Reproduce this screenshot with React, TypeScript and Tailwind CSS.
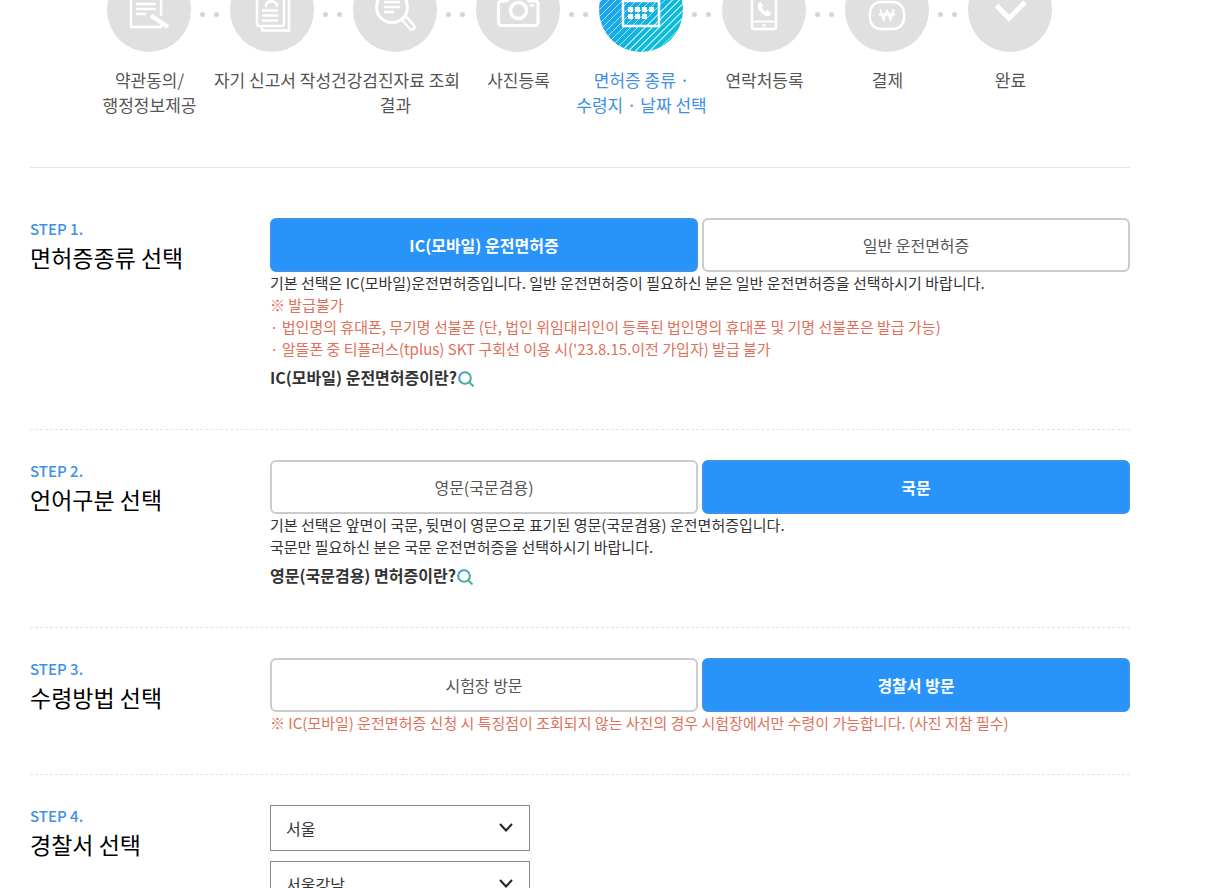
import { useState } from "react";
import type { ReactNode } from "react";

const Line = ({ children }: { children: ReactNode }) => (
  <svg
    viewBox="0 0 84 84"
    className="size-[84px] shrink-0"
    fill="none"
    stroke="#fff"
    strokeWidth="2.5"
    strokeLinecap="round"
    strokeLinejoin="round"
    aria-hidden="true"
  >
    {children}
  </svg>
);

const steps: { label: string[]; active?: boolean; icon: ReactNode }[] = [
  {
    label: ["약관동의/", "행정정보제공"],
    icon: (
      <>
        <path d="M54 47V24H24V59H54V57" />
        <path d="M30 30H48M30 36H48M30 41H48M30 46H38" />
        <path d="M44 47.500L61 59" strokeWidth="4.5" strokeLinecap="butt" />
      </>
    ),
  },
  {
    label: ["자기 신고서 작성"],
    icon: (
      <>
        <rect x="27" y="22" width="27" height="36" rx="2" />
        <path d="M32 59V62.500H59V28H54" />
        <path d="M33 42.500H47M33 47.500H47M33 52.500H47" />
        <path d="M36 38C36 32 47 32 47 38" />
        <circle cx="41" cy="29" r="3" />
      </>
    ),
  },
  {
    label: ["건강검진자료 조회", "결과"],
    icon: (
      <>
        <circle cx="39" cy="39" r="15.500" strokeWidth="3" />
        <path d="M32 34H46M32 39H46M32 44H40" />
        <path d="M52 51L59 59" strokeWidth="7.5" />
        <path d="M52.500 52L58.500 59" stroke="#e0e0e0" strokeWidth="3" />
      </>
    ),
  },
  {
    label: ["사진등록"],
    icon: (
      <>
        <path
          d="M26 33H31L34 28H50L53 33H59Q62 33 62 36V54Q62 57.500 59 57.500H26Q22.500 57.500 22.500 54V36Q22.500 33 26 33Z"
          strokeWidth="3"
        />
        <circle cx="42.500" cy="42.500" r="8" strokeWidth="3.5" />
        <path d="M55 37.500H57" strokeWidth="3" />
      </>
    ),
  },
  {
    label: ["면허증 종류 ·", "수령지 · 날짜 선택"],
    active: true,
    icon: (
      <>
        <path d="M24 27H60V58H24Z" />
        <path d="M24 33H60M32 23V29M52 23V29" />
        <path
          d="M29 41.500H34M36 41.500H41M43 41.500H48M50 41.500H55M29 48.500H34M36 48.500H41M43 48.500H48"
          strokeWidth="5"
          strokeLinecap="butt"
        />
      </>
    ),
  },
  {
    label: ["연락처등록"],
    icon: (
      <>
        <rect x="30" y="22" width="24" height="39" rx="2" />
        <path d="M30 53.500H54" strokeWidth="2" />
        <circle cx="42" cy="57.500" r="0.500" />
        <path
          d="M37 35.500C33 40 42 49 47 47.500L49 45.500L45 42.500L43.500 44C41.500 43 40.500 41.500 39.500 39.500L41 38L38.500 34.500Z"
          fill="#fff"
          strokeWidth="1"
        />
      </>
    ),
  },
  {
    label: ["결제"],
    icon: (
      <>
        <rect x="25" y="34" width="34" height="27" rx="11" />
        <path d="M35.500 42L38.500 52L42 42L45.500 52L48.500 42M34.500 46.500H49.500" strokeWidth="2" />
      </>
    ),
  },
  {
    label: ["완료"],
    icon: <path d="M28.500 37.500L41 50.500L57 34" strokeWidth="5" strokeLinecap="butt" strokeLinejoin="miter" />,
  },
];

function StepNav() {
  return (
    <ol className="-mt-8 flex justify-center">
      {steps.map((step, i) => (
        <li key={step.label[0]} className="relative flex w-[123px] flex-col items-center">
          <div className="ml-[19px] size-[84px] self-start overflow-hidden rounded-full bg-[#e0e0e0]">
            {step.active ? (
              <div className="bg-linear-to-br from-[#2893f8] to-[#08c8cc]">
                <div className="bg-[repeating-linear-gradient(135deg,transparent_0_4px,#ffffffa0_4px_5px)]">
                  <Line>{step.icon}</Line>
                </div>
              </div>
            ) : (
              <Line>{step.icon}</Line>
            )}
          </div>
          {i < steps.length - 1 && (
            <div className="absolute top-11 -right-2 flex gap-[9px]">
              <i className="size-[5px] rounded-full bg-[#d5d5d5]" />
              <i className="size-[5px] rounded-full bg-[#d5d5d5]" />
            </div>
          )}
          <p
            className={`mt-[15px] text-center text-[17px] leading-[25px] whitespace-nowrap ${
              step.active ? "text-[#3e90e5]" : "text-[#555]"
            }`}
          >
            {step.label.map((line) => (
              <span key={line} className="block">
                {line}
              </span>
            ))}
          </p>
        </li>
      ))}
    </ol>
  );
}

function Section({ no, title, last, children }: { no: number; title: string; last?: boolean; children: ReactNode }) {
  return (
    <section className={`flex pb-10 ${last ? "" : "mb-[30px] border-b border-dashed border-[#e3e3e3]"}`}>
      <div className="w-60 shrink-0">
        <p className="text-[15px] leading-[22px] font-medium text-[#3e90e5]">STEP {no}.</p>
        <h2 className="text-[23px] leading-[34px] text-black">{title}</h2>
      </div>
      <div className="min-w-0 flex-1">{children}</div>
    </section>
  );
}

function Choice({ options, initial }: { options: string[]; initial: number }) {
  const [selected, setSelected] = useState(initial);

  return (
    <div className="grid grid-cols-2 gap-1">
      {options.map((option, i) => (
        <button
          key={option}
          type="button"
          aria-pressed={selected === i}
          onClick={() => setSelected(i)}
          className={`h-[54px] rounded-md border-2 text-[16px] ${
            selected === i
              ? "border-[#3b93ea] bg-[#2893f8] font-bold text-white"
              : "border-[#ccc] bg-white text-[#555]"
          }`}
        >
          {option}
        </button>
      ))}
    </div>
  );
}

function HelpLink({ children }: { children: ReactNode }) {
  return (
    <a href="#help" className="mt-[5px] flex h-6 items-center gap-px text-[16px] font-bold text-[#333]">
      {children}
      <svg viewBox="0 0 16 16" className="mt-1 size-4" fill="none" strokeWidth="2" aria-hidden="true">
        <defs>
          <linearGradient id="lens" gradientUnits="userSpaceOnUse" x1="1" y1="1" x2="15" y2="15">
            <stop stopColor="#3e90e5" />
            <stop offset="1" stopColor="#4cba7c" />
          </linearGradient>
        </defs>
        <circle cx="7" cy="7" r="5.800" stroke="url(#lens)" />
        <path d="M11 11L15.500 15.500" stroke="url(#lens)" />
      </svg>
    </a>
  );
}

function Select({ label, options }: { label: string; options: string[] }) {
  return (
    <div className="relative w-[260px]">
      <select
        aria-label={label}
        className="h-[46px] w-full appearance-none border border-[#888] bg-white px-[15px] text-[16px] text-[#333]"
      >
        {options.map((o) => (
          <option key={o}>{o}</option>
        ))}
      </select>
      <svg
        viewBox="0 0 14 9"
        className="pointer-events-none absolute top-[18px] right-[17px] h-[9px] w-[14px]"
        fill="none"
        stroke="#222"
        strokeWidth="2"
        aria-hidden="true"
      >
        <path d="M1 1L7 7.500L13 1" />
      </svg>
    </div>
  );
}

export default function App() {
  return (
    <div className="h-screen overflow-hidden bg-white px-[30px] font-['Noto_Sans_CJK_KR',sans-serif] text-[#333]">
      <main className="flow-root max-w-[1100px]">
        <StepNav />
        <div className="mt-[50px] mb-[50px] border-t border-[#e5e5e5]" />

        <Section no={1} title="면허증종류 선택">
          <Choice options={["IC(모바일) 운전면허증", "일반 운전면허증"]} initial={0} />
          <div className="text-[15px] leading-[22px]">
            <p>기본 선택은 IC(모바일)운전면허증입니다. 일반 운전면허증이 필요하신 분은 일반 운전면허증을 선택하시기 바랍니다.</p>
            <div className="text-[#e0705a]">
              <p>※ 발급불가</p>
              <p>· 법인명의 휴대폰, 무기명 선불폰 (단, 법인 위임대리인이 등록된 법인명의 휴대폰 및 기명 선불폰은 발급 가능)</p>
              <p>· 알뜰폰 중 티플러스(tplus) SKT 구회선 이용 시('23.8.15.이전 가입자) 발급 불가</p>
            </div>
          </div>
          <HelpLink>IC(모바일) 운전면허증이란?</HelpLink>
        </Section>

        <Section no={2} title="언어구분 선택">
          <Choice options={["영문(국문겸용)", "국문"]} initial={1} />
          <div className="text-[15px] leading-[22px]">
            <p>기본 선택은 앞면이 국문, 뒷면이 영문으로 표기된 영문(국문겸용) 운전면허증입니다.</p>
            <p>국문만 필요하신 분은 국문 운전면허증을 선택하시기 바랍니다.</p>
          </div>
          <HelpLink>영문(국문겸용) 면허증이란?</HelpLink>
        </Section>

        <Section no={3} title="수령방법 선택">
          <Choice options={["시험장 방문", "경찰서 방문"]} initial={1} />
          <p className="text-[15px] leading-[22px] text-[#e0705a]">
            ※ IC(모바일) 운전면허증 신청 시 특징점이 조회되지 않는 사진의 경우 시험장에서만 수령이 가능합니다. (사진 지참 필수)
          </p>
        </Section>

        <Section no={4} title="경찰서 선택" last>
          <div className="flex flex-col gap-[10px]">
            <Select label="지역" options={["서울", "부산", "대구", "인천"]} />
            <Select label="경찰서" options={["서울강남", "서울강동", "서울강북"]} />
          </div>
        </Section>
      </main>
    </div>
  );
}
